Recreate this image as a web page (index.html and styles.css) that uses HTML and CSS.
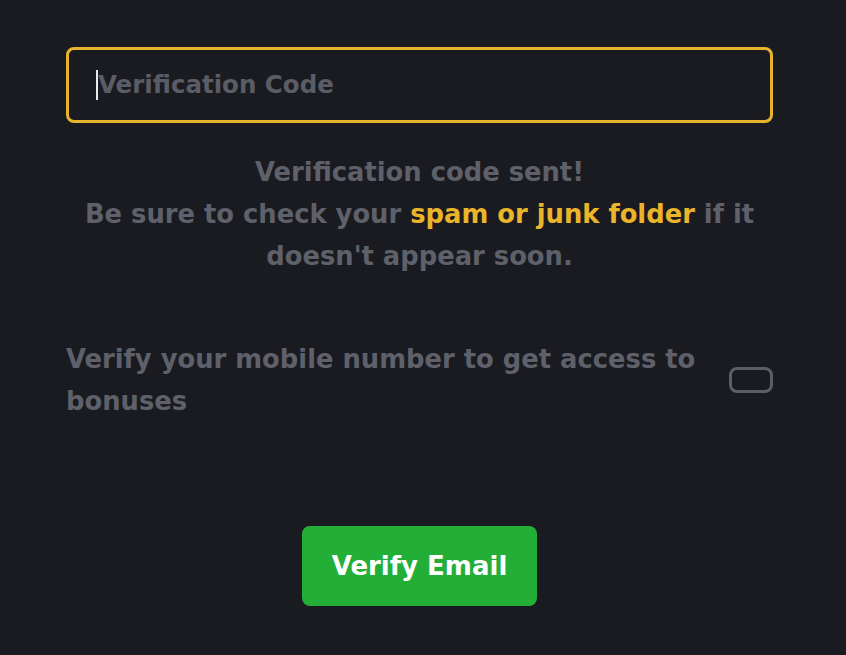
FILE: index.html
```html
<!DOCTYPE html>
<html>
<head>
<meta charset="utf-8">
<link rel="stylesheet" href="styles.css">
</head>
<body>
<main class="panel">
  <div class="code-field">
    <span class="caret"></span>
    <span class="placeholder">Verification Code</span>
  </div>
  <p class="notice">
    Verification code sent!<br>
    Be sure to check your <span class="hl">spam or junk folder</span> if it doesn't appear soon.
  </p>
  <div class="mobile-row">
    <p class="mobile-text">Verify your mobile number to get access to bonuses</p>
    <span class="toggle"></span>
  </div>
  <div class="actions">
    <button class="verify-btn">Verify Email</button>
  </div>
</main>
</body>
</html>
```
FILE: styles.css
```css
html, body {
  margin: 0;
  padding: 0;
  background: #1a1b20;
}
body {
  font-family: "DejaVu Sans", "Open Sans", sans-serif;
  font-weight: 700;
  color: #5e606a;
}
.panel {
  width: 707px;
  margin-left: 66px;
  padding-top: 47px;
}
.code-field {
  box-sizing: border-box;
  height: 76px;
  border: 3px solid #e8b42c;
  border-radius: 8px;
  display: flex;
  align-items: center;
  padding-left: 27px;
  padding-bottom: 1px;
}
.caret {
  width: 2px;
  height: 30px;
  background: #e9e9ec;
}
.placeholder {
  font-size: 24.5px;
  color: #5a5c66;
}
.notice {
  margin: 28px 0 0;
  text-align: center;
  font-size: 25.8px;
  line-height: 42px;
}
.hl {
  color: #eab42b;
}
.mobile-row {
  margin-top: 61px;
  display: flex;
  align-items: center;
  justify-content: space-between;
}
.mobile-text {
  margin: 0;
  width: 650px;
  font-size: 25.8px;
  line-height: 42px;
}
.toggle {
  box-sizing: border-box;
  width: 44px;
  height: 26px;
  border: 3px solid #5c5e66;
  border-radius: 8px;
}
.actions {
  display: flex;
  justify-content: center;
  margin-top: 104px;
}
.verify-btn {
  width: 235px;
  height: 80px;
  border: none;
  border-radius: 8px;
  background: #23ae38;
  color: #ffffff;
  font-family: inherit;
  font-weight: 700;
  font-size: 26px;
}
```
